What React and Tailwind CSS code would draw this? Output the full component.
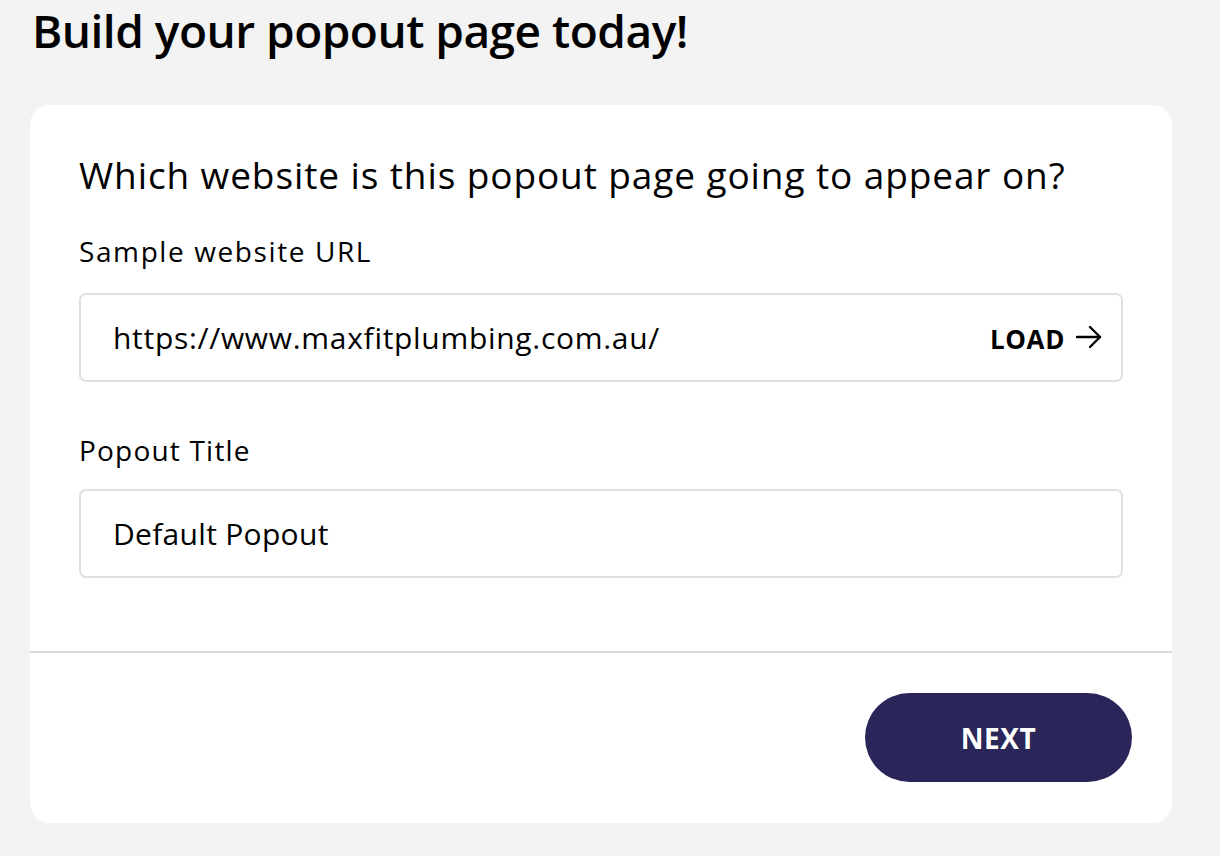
export default function App() {
  return (
    <div className="min-h-[856px] bg-[#f3f3f3] pl-[30px] pr-[48px] pt-[2px] font-['Open_Sans',sans-serif] text-black">
      <h1 className="ml-[2px] text-[46px] font-semibold leading-[56px] tracking-[-0.5px]">
        Build your popout page today!
      </h1>

      <div className="mt-[47px] rounded-[20px] bg-white">
        <div className="px-[49px] pt-[47px] pb-[73px]">
          <h2 className="text-[37px] leading-[46px] tracking-[0.9px]">
            Which website is this popout page going to appear on?
          </h2>

          <label className="mt-[35px] block text-[28px] leading-[36px] tracking-[1.6px]">
            Sample website URL
          </label>
          <div className="mt-[24px] flex h-[89px] items-center rounded-[7px] border-2 border-[#e0e0e0] pl-[32px] pr-[18px]">
            <span className="flex-1 text-[30px] tracking-[0.7px]">https://www.maxfitplumbing.com.au/</span>
            <button className="flex items-center gap-[10px] pt-[4px] text-[26px] font-bold tracking-[0.6px]">
              LOAD
              <svg viewBox="0 0 28 24" className="-mt-[6px] h-[24px] w-[28px]" fill="none" stroke="currentColor" strokeWidth="2.4" strokeLinecap="round" strokeLinejoin="round">
                <path d="M2 12h23" />
                <path d="M15 2l10 10-10 10" />
              </svg>
            </button>
          </div>

          <label className="mt-[50px] block text-[28px] leading-[36px] tracking-[1.2px]">
            Popout Title
          </label>
          <div className="mt-[21px] flex h-[89px] items-center rounded-[7px] border-2 border-[#e0e0e0] pl-[32px]">
            <span className="text-[30px] tracking-[0.3px]">Default Popout</span>
          </div>
        </div>

        <div className="border-t-2 border-[#d9d9d9]" />

        <div className="flex justify-end px-[40px] pt-[40px] pb-[41px]">
          <button className="h-[89px] w-[267px] rounded-full bg-[#2a2659] text-[28px] font-bold tracking-[0.6px] text-white">
            NEXT
          </button>
        </div>
      </div>
    </div>
  );
}
